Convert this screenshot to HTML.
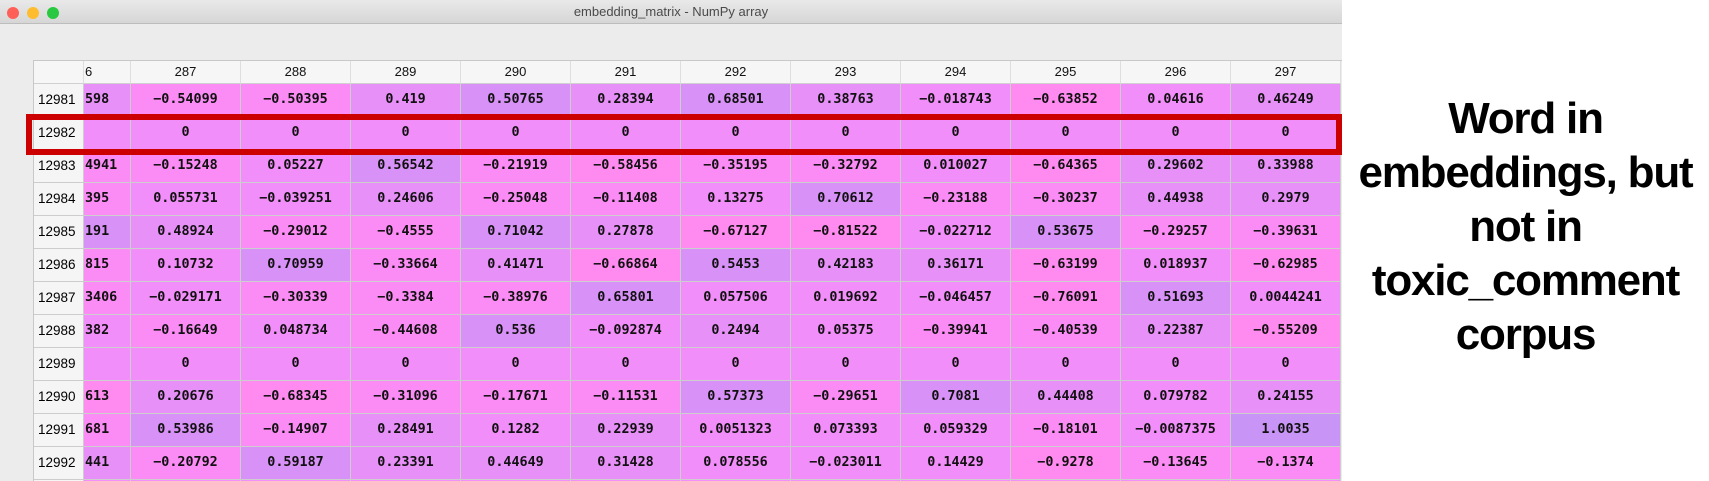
<!DOCTYPE html>
<html><head><meta charset="utf-8"><style>
*{margin:0;padding:0;box-sizing:border-box}
html,body{width:1709px;height:481px;overflow:hidden}
body{background:#fff;position:relative;font-family:"Liberation Sans",sans-serif}
#win{position:absolute;left:0;top:0;width:1342px;height:481px;background:#ececec;overflow:hidden}
#tb{position:absolute;left:0;top:0;width:1342px;height:24px;background:linear-gradient(#e9e9e9,#d6d6d6);border-bottom:1px solid #bdbdbd;text-align:center;font-size:13px;line-height:24px;color:#4a4a4a}
.dot{position:absolute;top:7px;width:12px;height:12px;border-radius:6px}
#tbl{position:absolute;left:33px;top:60px;width:1309px;height:421px;overflow:hidden;border-left:1px solid #c8c8c8;border-top:1px solid #c8c8c8}
.r{position:absolute;left:0;height:33px;width:1309px}
.c{position:absolute;top:0;height:33px;border-right:1px solid #cdcdcd;border-bottom:1px solid #cdcdcd;font-family:"DejaVu Sans Mono",monospace;font-weight:bold;font-size:13.4px;line-height:32px;text-align:center;color:#111;overflow:hidden;white-space:nowrap}
.h .c{height:23px;line-height:22px;background:#f6f6f6;font-family:"Liberation Sans",sans-serif;font-weight:normal;font-size:13px;border-right:1px solid #dedede;border-bottom:1px solid #d0d0d0}
.ix{left:0;width:50px;background:#f5f5f5;font-family:"Liberation Sans",sans-serif!important;font-weight:normal!important;font-size:13.5px!important;text-align:left!important;padding-left:4px;color:#000!important}
.f{left:50px;width:47px;text-align:left!important;padding-left:1px}
.p1{background:#ff8bf0}.p2{background:#fb8cf5}.p3{background:#f28ef9}.p4{background:#e790f8}.p5{background:#d891f6}.p6{background:#c894f6}
#red{position:absolute;left:26px;top:114px;width:1316px;height:41px;border:6px solid #cc0000}
#txt{position:absolute;left:1342px;top:92px;width:367px;text-align:center;font-weight:bold;font-size:44px;line-height:54px;letter-spacing:-1.2px;color:#000}
</style></head><body>
<div id="win">
<div id="tb"><div class="dot" style="left:7px;background:#fe5f57"></div><div class="dot" style="left:27px;background:#febc2e"></div><div class="dot" style="left:47px;background:#28c840"></div>embedding_matrix - NumPy array</div>
<div id="tbl"></div>
</div>
<div id="red"></div>
<div id="txt">Word in<br>embeddings, but<br>not in<br>toxic_comment<br>corpus</div>
<script>
var rows=[
["12981","598","p4",["-0.54099","-0.50395","0.419","0.50765","0.28394","0.68501","0.38763","-0.018743","-0.63852","0.04616","0.46249"]],
["12982","","p3",null],
["12983","4941","p2",["-0.15248","0.05227","0.56542","-0.21919","-0.58456","-0.35195","-0.32792","0.010027","-0.64365","0.29602","0.33988"]],
["12984","395","p2",["0.055731","-0.039251","0.24606","-0.25048","-0.11408","0.13275","0.70612","-0.23188","-0.30237","0.44938","0.2979"]],
["12985","191","p5",["0.48924","-0.29012","-0.4555","0.71042","0.27878","-0.67127","-0.81522","-0.022712","0.53675","-0.29257","-0.39631"]],
["12986","815","p2",["0.10732","0.70959","-0.33664","0.41471","-0.66864","0.5453","0.42183","0.36171","-0.63199","0.018937","-0.62985"]],
["12987","3406","p2",["-0.029171","-0.30339","-0.3384","-0.38976","0.65801","0.057506","0.019692","-0.046457","-0.76091","0.51693","0.0044241"]],
["12988","382","p3",["-0.16649","0.048734","-0.44608","0.536","-0.092874","0.2494","0.05375","-0.39941","-0.40539","0.22387","-0.55209"]],
["12989","","p3",null],
["12990","613","p1",["0.20676","-0.68345","-0.31096","-0.17671","-0.11531","0.57373","-0.29651","0.7081","0.44408","0.079782","0.24155"]],
["12991","681","p2",["0.53986","-0.14907","0.28491","0.1282","0.22939","0.0051323","0.073393","0.059329","-0.18101","-0.0087375","1.0035"]],
["12992","441","p4",["-0.20792","0.59187","0.23391","0.44649","0.31428","0.078556","-0.023011","0.14429","-0.9278","-0.13645","-0.1374"]],
["","","p3",["","","","","","","","","","",""]]];
function cls(v){v=parseFloat(v);if(v<-0.55)return"p1";if(v<-0.1)return"p2";if(v<0.2)return"p3";if(v<0.5)return"p4";if(v<0.9)return"p5";return"p6";}
var h='<div class="r h" style="top:0"><div class="c ix" style="height:23px"></div><div class="c f">6</div>';
for(var i=0;i<11;i++)h+='<div class="c" style="left:'+(97+110*i)+'px;width:110px">'+(287+i)+'</div>';
h+='</div>';
rows.forEach(function(r,k){
 h+='<div class="r" style="top:'+(23+33*k)+'px"><div class="c ix">'+r[0]+'</div><div class="c f '+r[2]+'">'+r[1]+'</div>';
 for(var i=0;i<11;i++){var v=r[3]?r[3][i]:"0";var c=(r[3]&&v!=="")?cls(v):"p3";
  h+='<div class="c '+c+'" style="left:'+(97+110*i)+'px;width:110px">'+v.replace("-","\u2212")+'</div>';}
 h+='</div>';});
document.getElementById('tbl').innerHTML=h;
</script>
</body></html>
